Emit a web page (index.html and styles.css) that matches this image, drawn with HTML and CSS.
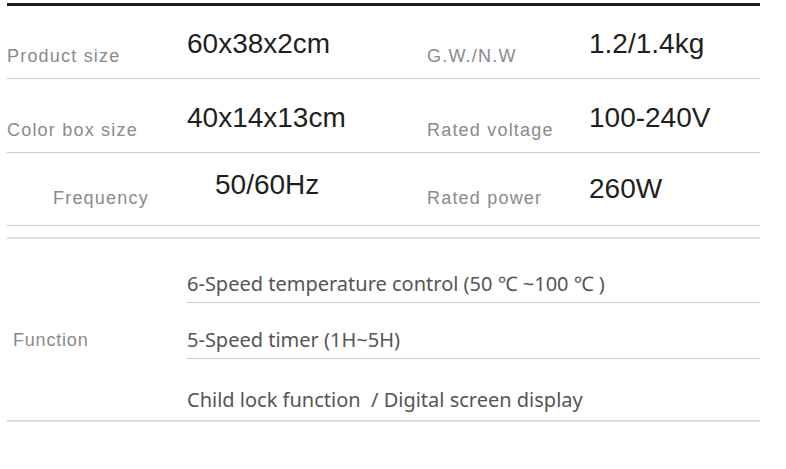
FILE: index.html
```html
<!DOCTYPE html>
<html lang="en">
<head>
<meta charset="utf-8">
<title>Specifications</title>
<link rel="stylesheet" href="styles.css">
</head>
<body>
<div class="spec">
  <div class="spec-row row-1">
    <div class="label">Product size</div>
    <div class="value">60x38x2cm</div>
    <div class="label">G.W./N.W</div>
    <div class="value">1.2/1.4kg</div>
  </div>
  <div class="spec-row row-2">
    <div class="label">Color box size</div>
    <div class="value">40x14x13cm</div>
    <div class="label">Rated voltage</div>
    <div class="value">100-240V</div>
  </div>
  <div class="spec-row row-3">
    <div class="label label-indent">Frequency</div>
    <div class="value value-indent">50/60Hz</div>
    <div class="label">Rated power</div>
    <div class="value">260W</div>
  </div>
  <div class="divider"></div>
  <div class="function">
    <div class="label function-label">Function</div>
    <div class="function-list">
      <div class="item item-1">6-Speed temperature control (50 ℃ ~100 ℃ )</div>
      <div class="item item-2">5-Speed timer (1H~5H)</div>
      <div class="item item-3">Child lock function &nbsp;/ Digital screen display</div>
    </div>
  </div>
</div>
</body>
</html>
```
FILE: styles.css
```css
html, body {
  margin: 0;
  padding: 0;
  background: #ffffff;
}

body {
  padding: 3px 0 0 7px;
  font-family: "Liberation Sans", Arial, sans-serif;
}

.spec {
  width: 753px;
  border-top: 3px solid #1c1c1c;
}

.spec-row {
  display: grid;
  grid-template-columns: 180px 240px 162px 1fr;
  align-items: end;
  border-bottom: 1px solid #cbcbcb;
}

.row-1 { height: 72px; }
.row-2 { height: 73px; }
.row-3 { height: 72px; }

.label {
  font-size: 18px;
  line-height: 20px;
  letter-spacing: 1.2px;
  color: #8a8a8a;
  padding-bottom: 12px;
  white-space: nowrap;
}

.value {
  font-size: 28px;
  line-height: 32px;
  color: #1f1f1f;
  padding-bottom: 18px;
  white-space: nowrap;
}

.row-3 .label { padding-bottom: 17px; }
.row-3 .value { padding-bottom: 20px; }

.label-indent { padding-left: 46px; }
.value-indent { padding-left: 28px; }
.row-3 .value-indent { padding-bottom: 24px; }

.divider {
  margin-top: 11px;
  border-top: 2px solid #e0e0e0;
}

.function {
  display: grid;
  grid-template-columns: 180px 1fr;
  border-bottom: 2px solid #dedede;
}

.function-label {
  align-self: center;
  padding: 20px 0 0 6px;
  letter-spacing: 0.8px;
}

.function-list {
  display: flex;
  flex-direction: column;
}

.item {
  display: flex;
  align-items: flex-end;
  box-sizing: border-box;
  font-family: "Noto Sans", sans-serif;
  font-size: 20px;
  line-height: 26px;
  color: #555555;
  white-space: nowrap;
}

.item-1 {
  height: 64px;
  padding-bottom: 5px;
  border-bottom: 1px solid #cbcbcb;
}

.item-2 {
  height: 56px;
  padding-bottom: 5px;
  border-bottom: 1px solid #cbcbcb;
}

.item-3 {
  height: 61px;
  padding-bottom: 7px;
}
```
